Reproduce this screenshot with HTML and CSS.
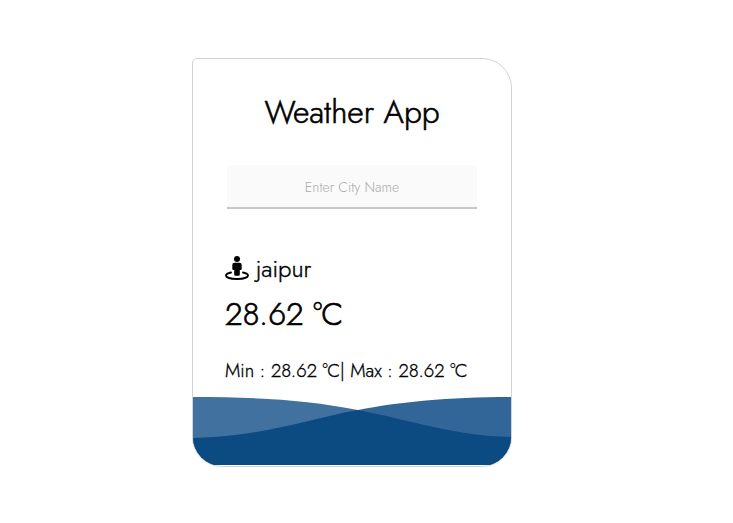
FILE: index.html
```html
<!DOCTYPE html>
<html lang="en">
<head>
<meta charset="utf-8">
<title>Weather App</title>
<link rel="stylesheet" href="styles.css">
</head>
<body>
<main class="card">
  <h1 class="title">Weather App</h1>
  <input class="search" type="text" placeholder="Enter City Name">
  <section class="info">
    <h2 class="location">
      <svg class="pin" viewBox="0 0 24 24" aria-hidden="true">
        <circle cx="12" cy="3" r="3"/>
        <path d="M9.500 6.800h5a2.200 2.200 0 0 1 2.200 2.200v3.800a1.200 1.200 0 0 1-1.200 1.200h-.7v4.600a1.200 1.200 0 0 1-1.200 1.200h-3.200a1.200 1.200 0 0 1-1.200-1.200V14h-.7a1.200 1.200 0 0 1-1.200-1.200V9A2.200 2.200 0 0 1 9.500 6.800z"/>
        <path class="ring" d="M6 16.500C2.500 17.200 1 18.300 1 19.500C1 21.500 5.500 23 12 23s11-1.500 11-3.500c0-1.200-1.500-2.300-5-3"/>
      </svg>
      <span class="city">jaipur</span>
    </h2>
    <p class="temp"><span>28.62</span> <span>°C</span></p>
    <p class="range"><span>Min : 28.62</span> <span>°C</span>| <span>Max : 28.62</span> <span>°C</span></p>
  </section>
  <svg class="waves" viewBox="0 0 318 68" preserveAspectRatio="none" aria-hidden="true">
    <path class="wave-back" d="M0 0C63 0 114 3 165 13C216 23 263 39 318 40V68H0z"/>
    <path class="wave-front" d="M318 0C255 0 206 5 165 13C112 23 66 40 0 41V68H318z"/>
    <path class="wave-base" d="M0 41C66 40 112 23 165 13C216 23 263 39 318 40V68H0z"/>
  </svg>
</main>
</body>
</html>
```

FILE: styles.css
```css
* { box-sizing: border-box; margin: 0; }
body {
  padding: 58px 0 0 192px;
  background: #fff;
  color: #000;
  font-family: Jost, Lato, sans-serif;
}
.card {
  display: flex;
  flex-direction: column;
  width: 320px;
  height: 409px;
  border: 1px solid #d3d3d3;
  border-radius: 5px 30px 30px 30px;
  overflow: hidden;
}
.title {
  margin-top: 29px;
  font-size: 32px;
  line-height: 48px;
  font-weight: 300;
  text-align: center;
  white-space: nowrap;
  -webkit-text-stroke: 0.6px #000;
}
.search {
  width: 250px;
  height: 44px;
  margin: 29px 0 0 34px;
  padding: 1px 0 0;
  border: 0;
  border-bottom: 2px solid #c8c8c8;
  border-radius: 3px 3px 0 0;
  background: #fafafa;
  font-family: inherit;
  font-size: 14px;
  font-weight: 300;
  text-align: center;
  outline: 0;
  appearance: none;
}
.search::placeholder { color: #aaa; opacity: 1; }
.info { padding-left: 32px; white-space: nowrap; font-weight: 300; -webkit-text-stroke: 0.4px #000; }
.location {
  display: flex;
  align-items: center;
  height: 36px;
  margin-top: 41px;
  font-size: 24px;
  font-weight: 300;
}
.pin { width: 24px; height: 24px; margin-right: 7px; }
.city { padding-top: 1px; }
.ring { fill: none; stroke: #000; stroke-width: 1.9; stroke-linecap: round; }
.temp { margin-top: 4px; font-size: 32px; line-height: 48px; -webkit-text-stroke: 0.6px #000; }
.range { margin-top: 19px; font-size: 18.72px; line-height: 28px; -webkit-text-stroke: 0.3px #000; }
.waves { display: block; width: 318px; height: 68px; margin-top: auto; margin-bottom: 1px; }
.wave-back { fill: #41719e; }
.wave-front { fill: #336698; }
.wave-base { fill: #0c4a82; }
```
